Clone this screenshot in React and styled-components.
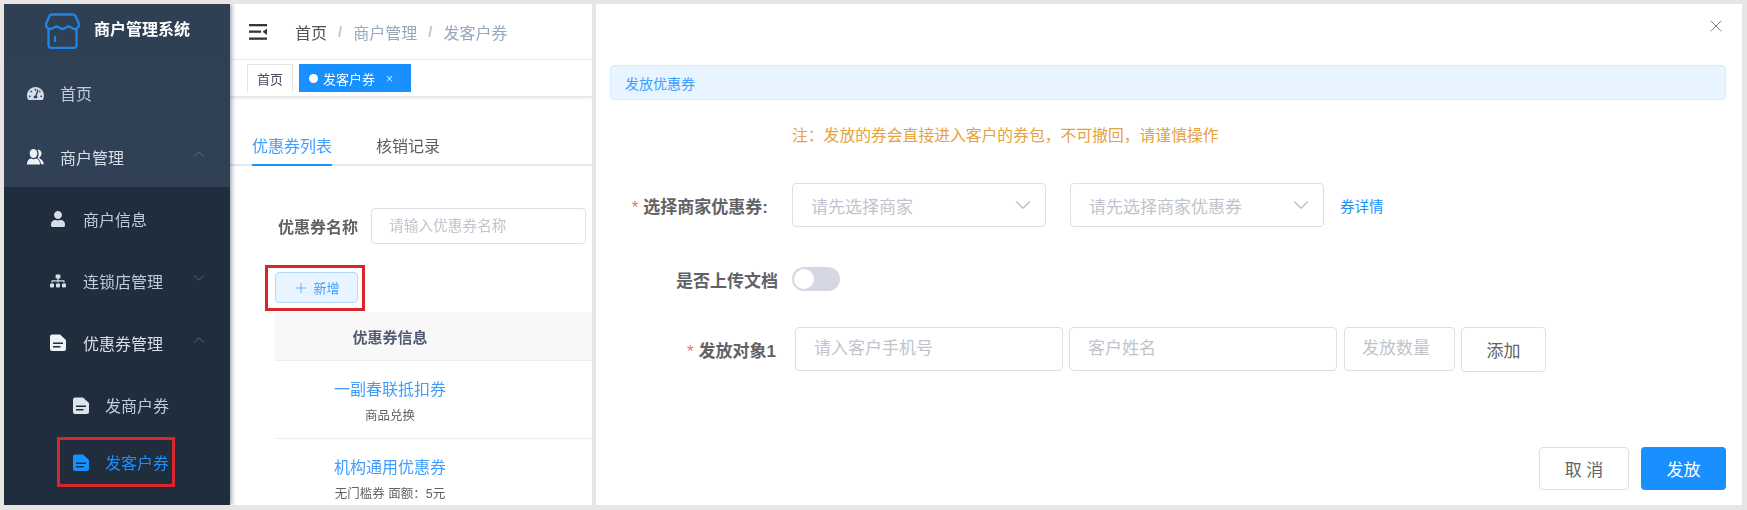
import React from 'react';
import styled, { createGlobalStyle } from 'styled-components';
import { FaTachometerAlt, FaUser, FaSitemap } from 'react-icons/fa';
import { ChevronUp, ChevronDown, X, Plus } from 'lucide-react';

const Global = createGlobalStyle`
  html, body { margin: 0; padding: 0; }
  body { background: #e8e5e5; font-family: "Liberation Sans", "Noto Sans CJK SC", sans-serif; overflow: hidden; }
  * { box-sizing: border-box; }
  input { font-family: inherit; }
`;

const Page = styled.div`
  display: flex; gap: 4px; width: 1747px; height: 510px; padding: 4px 5px 5px 4px; filter: blur(.35px);
`;
const LeftShot = styled.div`
  display: flex; width: 588px; height: 501px; overflow: hidden; background: #fff; flex: none;
`;
const Sidebar = styled.aside`
  width: 226px; flex: none; display: flex; flex-direction: column; background: #304156;
  box-shadow: 2px 0 4px rgba(0,21,41,.35); position: relative; z-index: 1; color: #bfcbd9;
`;
const Brand = styled.div`
  height: 58px; display: flex; align-items: flex-start; padding: 9px 0 0 41px; gap: 14px;
  background: #2f4054;
`;
const BrandName = styled.span`
  font-size: 16px; font-weight: 700; color: #fff; line-height: 20px; margin-top: 7px; white-space: nowrap;
`;
const MenuItem = styled.div`
  height: ${p => p.$h}px; display: flex; align-items: center; padding-left: ${p => p.$left}px;
  font-size: 16px; color: ${p => p.$color || '#bfcbd9'}; position: relative; padding-bottom: ${p => p.$bottom || 0}px;
`;
const IconSlot = styled.span`
  width: 18px; display: flex; justify-content: center; flex: none; margin-right: ${p => p.$gap || 16}px;
  color: ${p => p.$color || '#d4dee9'}; font-size: 16px;
`;
const Caret = styled.span`
  margin-left: auto; margin-right: 22px; display: flex; color: #5d6d80; margin-top: -6px;
`;
const SubMenu = styled.div`
  flex: 1; background: #1f2d3d; display: flex; flex-direction: column;
`;
const Annotated = styled.div`
  width: 118px; height: 50px; margin: 1px 0 0 53px; border: 3px solid #d9262c; display: flex; align-items: center;
  padding-left: 12px; color: #1890ff; font-size: 16px;
`;
const Main = styled.div`
  flex: 1; min-width: 0; display: flex; flex-direction: column; position: relative;
`;
const Header = styled.div`
  height: 56px; flex: none; display: flex; align-items: center; padding: 0 0 0 19px; border-bottom: 1px solid #f0f0f0;
`;
const Crumbs = styled.div`
  display: flex; align-items: center; margin-left: 28px; font-size: 16px; color: #97a8be;
`;
const CrumbHome = styled.span`color: #4e5359;`;
const CrumbSep = styled.span`margin: 0 11px; color: #c0c4cc; font-weight: 700; font-size: 15px;`;
const TagBar = styled.div`
  height: 37px; flex: none; display: flex; padding: 4px 0 0 17px; gap: 6px; border-bottom: 1px solid #e6e6e6;
  box-shadow: 0 1px 3px rgba(0,0,0,.12);
`;
const Tag = styled.div`
  height: 28px; display: flex; align-items: center; font-size: 13px;
  ${p => p.$active
    ? 'width: 112px; padding-left: 10px; background: #1890ff; color: #fff;'
    : 'width: 46px; justify-content: center; color: #495060; border: 1px solid #e4e4e4; border-bottom: 0;'}
`;
const Dot = styled.span`width: 9px; height: 9px; border-radius: 50%; background: #fff; margin-right: 5px;`;
const TagClose = styled.span`margin-left: 11px; font-size: 12px; color: #d5e9ff; margin-top: 2px;`;
const TabBar = styled.div`
  height: 69px; flex: none; display: flex; align-items: flex-end; padding-left: 22px; gap: 44px; border-bottom: 2px solid #e4e7ed;
`;
const TabItem = styled.div`
  font-size: 16px; line-height: 22px; padding-bottom: 6px; margin-bottom: -2px; width: ${p => p.$w}px;
  color: ${p => p.$active ? '#409eff' : '#5a5e66'};
  border-bottom: 2px solid ${p => p.$active ? '#1890ff' : 'transparent'};
`;
const SearchRow = styled.div`
  margin-top: 42px; height: 36px; flex: none; display: flex; align-items: center; padding-left: 48px;
`;
const SearchLabel = styled.span`font-size: 16px; font-weight: 700; color: #606266; width: 93px; flex: none;`;
const Field = styled.input`
  width: ${p => p.$w}px; height: ${p => p.$h || 44}px; flex: none; border: 1px solid #dcdfe6; border-radius: 4px;
  padding: 0 ${p => p.$pad || 18}px; font-size: ${p => p.$fs || 17}px; background: #fff; outline: 0;
  &::placeholder { color: #c0c4cc; opacity: 1; }
`;
const AddMark = styled.div`
  width: 100px; height: 46px; margin: 21px 0 0 35px; flex: none; border: 3px solid #d9262c; padding: 4px 0 0 7px;
`;
const AddButton = styled.div`
  width: 83px; height: 31px; display: flex; align-items: center; justify-content: center; gap: 4px;
  background: #e8f4ff; border: 1px solid #b5d9fb; border-radius: 4px; color: #409eff; font-size: 13px;
`;
const TableHead = styled.div`
  height: 49px; flex: none; margin: 1px 0 0 45px; background: #f8f8f9; border-bottom: 1px solid #ebeef5; display: flex; align-items: center;
`;
const Cell = styled.div`
  width: 230px; text-align: center; flex: none;
`;
const HeadText = styled.span`font-size: 15px; font-weight: 700; color: #515a6e;`;
const Row = styled.div`
  height: ${p => p.$h}px; flex: none; margin-left: 45px; padding-top: ${p => p.$top}px;
  border-bottom: 1px solid ${p => p.$line ? '#ebeef5' : 'transparent'};
`;
const CouponName = styled.div`font-size: 16px; line-height: 22px; color: #409eff;`;
const CouponSub = styled.div`font-size: 12.5px; line-height: 16px; color: #606266; margin-top: 7px;`;

const Dialog = styled.section`
  flex: 1; min-width: 0; height: 501px; background: #fff; padding: 0 16px 15px 14px; display: flex; flex-direction: column;
`;
const CloseRow = styled.div`
  height: 61px; flex: none; display: flex; justify-content: flex-end; padding: 12px 0 0 0; color: #7e8287;
`;
const Alert = styled.div`
  height: 35px; flex: none; display: flex; align-items: center; padding-left: 14px; font-size: 14px; color: #409eff;
  background: #e8f4ff; border: 1px solid #d7ebfd; border-radius: 4px;
`;
const Note = styled.div`
  height: 22px; margin: 25px 0 0 182px; font-size: 15.8px; line-height: 22px; color: #e6a23c; white-space: nowrap; flex: none;
`;
const FormRow = styled.div`
  display: flex; align-items: center; height: ${p => p.$h}px; margin-top: ${p => p.$mt}px; flex: none;
`;
const FieldLabel = styled.label`
  width: ${p => p.$w}px; margin-right: ${p => p.$gap}px; flex: none; text-align: right; white-space: nowrap;
  font-size: 17px; font-weight: 700; color: #606266;
`;
const Star = styled.span`color: #f56c6c; margin-right: 5px; font-weight: 400;`;
const Select = styled.div`
  width: 254px; height: 44px; flex: none; margin-right: ${p => p.$mr}px; display: flex; align-items: center; justify-content: space-between;
  padding: 0 9px 0 18px; font-size: 17px; color: #c0c4cc; border: 1px solid #dcdfe6; border-radius: 4px;
`;
const LinkText = styled.span`font-size: 14.5px; color: #1890ff;`;
const Switch = styled.div`
  width: 48px; height: 24px; border-radius: 12px; background: #d5d8e3; padding: 2px; flex: none;
`;
const Knob = styled.div`width: 20px; height: 20px; border-radius: 50%; background: #fff;`;
const Gap = styled.span`width: ${p => p.$w}px; flex: none;`;
const Btn = styled.div`
  height: ${p => p.$h || 43}px; width: ${p => p.$w}px; flex: none; display: flex; align-items: center; justify-content: center;
  font-size: 17px; border-radius: 4px;
  ${p => p.$primary ? 'background: #1890ff; color: #fff;' : 'background: #fff; color: #606266; border: 1px solid #dcdfe6;'}
`;
const Footer = styled.div`
  margin-top: auto; display: flex; justify-content: flex-end; gap: 12px;
`;

const Logo = () => (
  <svg width="35" height="36" viewBox="0 0 35 36" fill="none" stroke="#1f86e6" strokeWidth="2.3" strokeLinejoin="round" strokeLinecap="round">
    <path d="M7 1.500h21a3 3 0 0 1 2.800 2L34 11c.5 3-2 5-4.500 5-2.500 0-4-2.500-6-2.500s-3.500 2.500-6 2.500-4-2.500-6-2.500-3.500 2.500-6 2.500S.5 14 1 11l3.200-7.500a3 3 0 0 1 2.800-2z" />
    <path d="M3.500 17v15a3 3 0 0 0 3 3h22a3 3 0 0 0 3-3V17" />
    <path d="M10 24v4" />
  </svg>
);
const Hamburger = () => (
  <svg width="18" height="16" viewBox="0 0 18 16" fill="#33363a">
    <rect x="0" y="0" width="18" height="2.300" />
    <rect x="0" y="6.500" width="12" height="2.300" />
    <rect x="0" y="13.500" width="18" height="2.300" />
    <path d="M18 4.500v6.500L13.500 7.700z" />
  </svg>
);
const UsersIcon = () => (
  <svg width="17" height="16" viewBox="0 0 17 16" fill="currentColor">
    <ellipse cx="6.500" cy="4.500" rx="3.800" ry="4.500" />
    <path d="M0 15.500c0-4 2-5.500 4-6 1.500 1 3.500 1 5 0 2 .5 4 2 4 6z" />
    <path d="M10.500 .8c2.200-.6 4 1.200 4 3.500 0 2-1 3.600-2.200 4.200l.2 1c2 .6 3.800 2.400 4.500 5.800h-3c-.3-2.500-1.500-5-3.500-6 1.500-2 1.500-6 0-8.500z" />
  </svg>
);
const FileIcon = () => (
  <svg width="16" height="17" viewBox="0 0 16 17" fill="currentColor" fillRule="evenodd">
    <path d="M2 .5h8l6 5.500v9a2 2 0 0 1-2 2H2a2 2 0 0 1-2-2v-12.500a2 2 0 0 1 2-2zM3 8.500h10v1.500H3zM3 12h7.500v1.500H3z" />
  </svg>
);

export default function App() {
  return (
    <Page>
      <Global />
      <LeftShot>
        <Sidebar>
          <Brand><Logo /><BrandName>商户管理系统</BrandName></Brand>
          <MenuItem $h={64} $left={22} $bottom={2}><IconSlot><FaTachometerAlt size={17} /></IconSlot>首页</MenuItem>
          <MenuItem $h={61} $left={22} $color="#d7dfe8">
            <IconSlot $color="#eef2f6"><UsersIcon /></IconSlot>商户管理
            <Caret><ChevronUp size={18} strokeWidth={1.2} /></Caret>
          </MenuItem>
          <SubMenu>
            <MenuItem $h={63} $left={45}><IconSlot><FaUser /></IconSlot>商户信息</MenuItem>
            <MenuItem $h={61} $left={45}><IconSlot><FaSitemap /></IconSlot>连锁店管理
              <Caret><ChevronDown size={18} strokeWidth={1.2} /></Caret>
            </MenuItem>
            <MenuItem $h={63} $left={45} $color="#d7dfe8"><IconSlot $color="#eef2f6"><FileIcon /></IconSlot>优惠券管理
              <Caret><ChevronUp size={18} strokeWidth={1.2} /></Caret>
            </MenuItem>
            <MenuItem $h={62} $left={68}><IconSlot $color="#dbe3ec" $gap={15}><FileIcon /></IconSlot>发商户券</MenuItem>
            <Annotated><IconSlot $color="#1890ff" $gap={15}><FileIcon /></IconSlot>发客户券</Annotated>
          </SubMenu>
        </Sidebar>
        <Main>
          <Header>
            <Hamburger />
            <Crumbs>
              <CrumbHome>首页</CrumbHome><CrumbSep>/</CrumbSep>商户管理<CrumbSep>/</CrumbSep>发客户券
            </Crumbs>
          </Header>
          <TagBar>
            <Tag>首页</Tag>
            <Tag $active><Dot />发客户券<TagClose>×</TagClose></Tag>
          </TagBar>
          <TabBar>
            <TabItem $active $w={80}>优惠券列表</TabItem>
            <TabItem $w={64}>核销记录</TabItem>
          </TabBar>
          <SearchRow>
            <SearchLabel>优惠券名称</SearchLabel>
            <Field $w={215} $h={36} $pad={17} $fs={14.7} placeholder="请输入优惠券名称" />
          </SearchRow>
          <AddMark><AddButton><Plus size={16} strokeWidth={1.1} />新增</AddButton></AddMark>
          <TableHead><Cell><HeadText>优惠券信息</HeadText></Cell></TableHead>
          <Row $h={78} $top={18} $line>
            <Cell><CouponName>一副春联抵扣券</CouponName><CouponSub>商品兑换</CouponSub></Cell>
          </Row>
          <Row $h={66} $top={18}>
            <Cell><CouponName>机构通用优惠券</CouponName><CouponSub>无门槛券 面额：5元</CouponSub></Cell>
          </Row>
        </Main>
      </LeftShot>
      <Dialog>
        <CloseRow><X size={20} strokeWidth={1.2} /></CloseRow>
        <Alert>发放优惠券</Alert>
        <Note>注：发放的券会直接进入客户的券包，不可撤回，请谨慎操作</Note>
        <FormRow $h={44} $mt={36}>
          <FieldLabel $w={158} $gap={24}><Star>*</Star>选择商家优惠券:</FieldLabel>
          <Select $mr={24}>请先选择商家<ChevronDown size={26} strokeWidth={1} color="#b4b8bf" /></Select>
          <Select $mr={16}>请先选择商家优惠券<ChevronDown size={26} strokeWidth={1} color="#b4b8bf" /></Select>
          <LinkText>券详情</LinkText>
        </FormRow>
        <FormRow $h={24} $mt={40}>
          <FieldLabel $w={168} $gap={14}>是否上传文档</FieldLabel>
          <Switch><Knob /></Switch>
        </FormRow>
        <FormRow $h={44} $mt={36}>
          <FieldLabel $w={166} $gap={19}><Star>*</Star>发放对象1</FieldLabel>
          <Field $w={268} placeholder="请入客户手机号" />
          <Gap $w={6} />
          <Field $w={268} placeholder="客户姓名" />
          <Gap $w={7} />
          <Field $w={111} $pad={17} placeholder="发放数量" />
          <Gap $w={6} />
          <Btn $w={85} $h={45}>添加</Btn>
        </FormRow>
        <Footer>
          <Btn $w={90}>取 消</Btn>
          <Btn $w={85} $primary>发放</Btn>
        </Footer>
      </Dialog>
    </Page>
  );
}
